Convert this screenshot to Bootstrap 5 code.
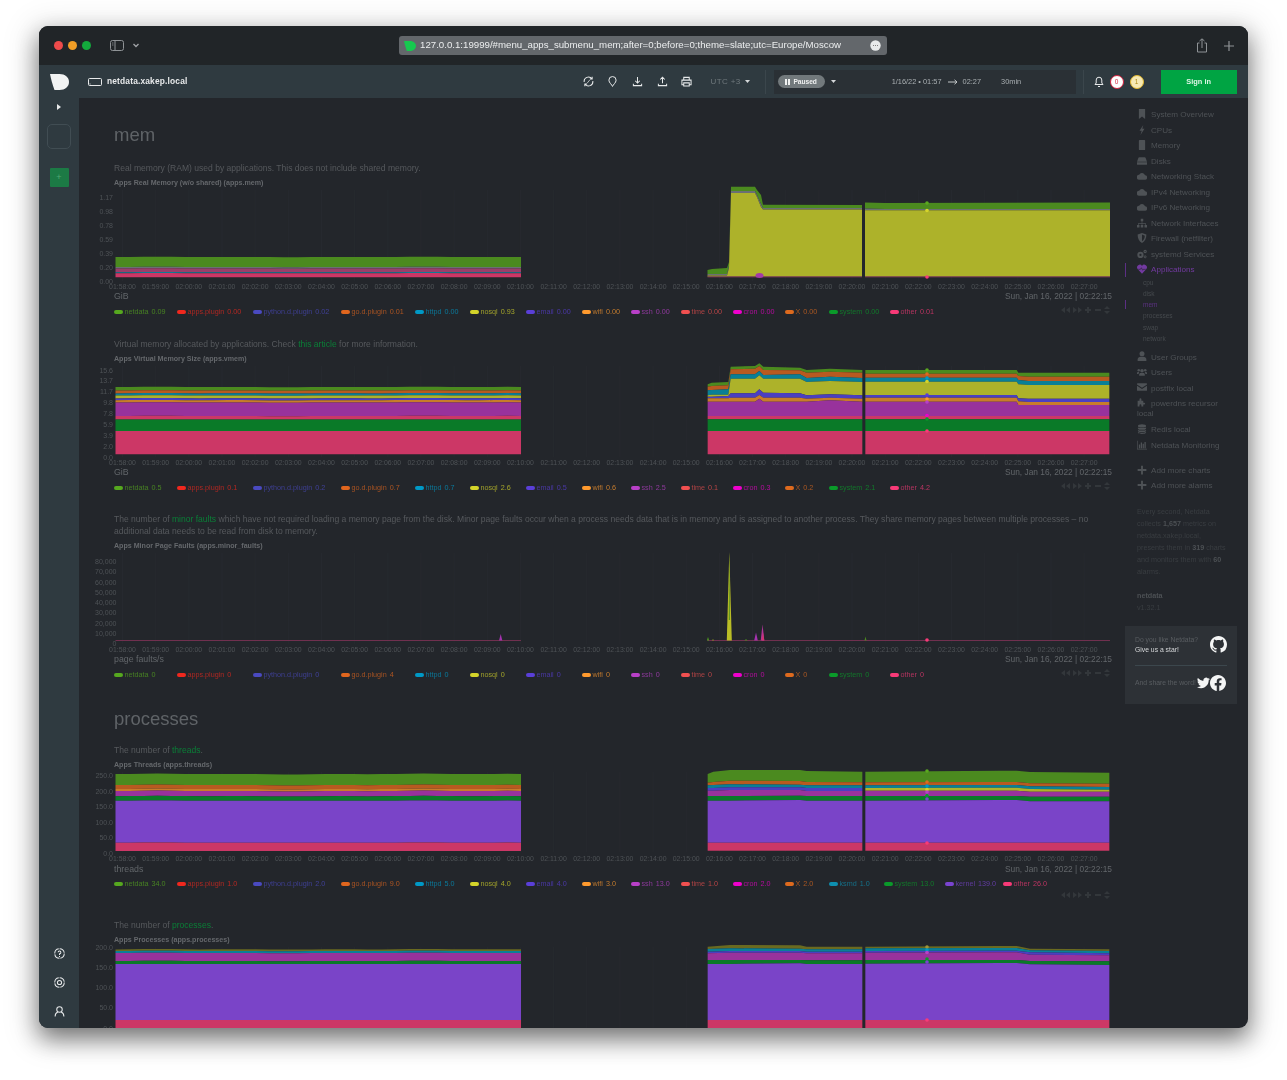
<!DOCTYPE html>
<html lang="en">
<head>
<meta charset="utf-8">
<title>netdata.xakep.local</title>
<link href="https://cdn.jsdelivr.net/npm/bootstrap@5.3.0/dist/css/bootstrap.min.css" rel="stylesheet">
<style>
html,body{height:1080px;overflow:hidden}
body{background:#fff;padding:26px 39px 52px;font-family:"Liberation Sans",Arial,sans-serif}
.sprite{position:absolute;width:0;height:0}
.win{height:1002px;width:1209px;border-radius:9px;overflow:hidden;background:#23262b;box-shadow:0 10px 24px rgba(0,0,0,.55),0 6px 28px 16px rgba(0,0,0,.06);filter:blur(.3px)}
.tbar{height:39px;background:#212528;flex:none;position:relative}
.light{width:9px;height:9px;border-radius:50%;margin-right:5px}
.l1{background:#ee4b4b;margin-left:14.5px}.l2{background:#f19d26}.l3{background:#13a83c}
.side-ic{margin-left:14.5px}.side-car{margin-left:7.5px}
.url{position:absolute;left:360px;top:10px;width:488px;height:19px;background:#63676b;border-radius:3px;color:#eceeef;font-size:9.68px;padding:0 6px 0 5px}
.plus-ic{margin:0 13px 0 15px}
.ndh{height:33px;background:#2f3a40;flex:none;color:#e8eaeb}
.ndh .hi{width:24.6px;text-align:center;flex:none;line-height:0}
.ndlogo{margin-left:11px}.monitor{margin-left:19px}
.host{font-size:8.4px;font-weight:700;margin-left:5px;width:469px;flex:none;letter-spacing:.02em}
.utc{font-size:8px;color:#6f787c;margin-left:11.5px;letter-spacing:.05em}
.car1{margin:0 15px 0 4px}.car2{margin:0 56px 0 6px}.arrow{margin:0 5px 0 6px}.dur{margin-left:20px}.bell{margin-left:10px}
.vr1{width:1px;height:24px;background:#3b464c;flex:none}
.tbox{width:302px;height:24px;background:#2a3035;margin-left:8px;margin-right:7px;font-size:7.4px;color:#a9afb2;flex:none}
.pill{background:#72797c;color:#f0f1f1;border-radius:7px;width:47px;height:13px;margin-left:4px;font-size:6.6px;font-weight:700;line-height:13px}
.pill svg{margin-right:3px}
.bdg{width:14px;height:14px;border-radius:50%;background:#fff;font-size:6.5px;line-height:11px;text-align:center;flex:none}
.b-r{border:1.5px solid #d6213e;color:#d6213e;margin-left:6px}
.b-y{border:1.5px solid #e2b72c;color:#b08a18;background:#f6e9b4;margin-left:6px}
.signin{width:76px;height:24px;background:#00a443;color:#dff5e7;font-size:7.4px;font-weight:700;border:0;border-radius:0;margin-left:17px;padding:0}
.rail{width:40px;flex:none;background:#2f3a40;padding-top:4px}
.chev{margin-top:2px}
.dash{width:24px;height:25px;border:1px solid #414d53;border-radius:5px;margin-top:14px}
.addb{width:19px;height:19px;background:#1c7a45;margin-top:19px;border-radius:1px;color:#4fa874;font-size:9px;line-height:19px;text-align:center}
.rmt{margin-top:18px}.rlast{margin:18px 0 11px}
main{width:1041px;flex:none;overflow:hidden;padding:26px 8px 0 35px}
h2.sec{font-size:18.5px;line-height:22px;color:#5f6367;font-weight:400;margin:0 0 16px}
h2.sec.second{margin:26.5px 0 14px}
.desc{font-size:8.56px;line-height:12px;color:#56595d;margin:0}
.desc a{color:#0a7f37;text-decoration:none}
.ctitle{font-size:7.1px;font-weight:700;line-height:12px;height:12px;margin-top:3px;color:#65686c}
main svg.chart{display:block;margin-left:-35px;width:1040px;overflow:visible}
.unit{font-size:8.35px;line-height:10px;height:10px;color:#62666a}
.unit span:first-child{font-size:8.8px}
.lg{height:12px;margin-top:5px;font-size:7.2px;line-height:12px;white-space:nowrap}
.lg i{display:inline-block;width:9px;height:4px;border-radius:2px;margin-right:1.5px;flex:none}
.lg span span{opacity:.68}
.lg b{font-weight:400;opacity:.72;margin-left:3px}
.blk{margin-bottom:19.5px}
.blk4{margin-bottom:18px}
.blk4 .lg{margin-top:4px}
.navrow{height:11px}
.navb{width:50px;height:8px;fill:#33373b;flex:none;margin-right:2px}
.rnav{width:128px;flex:none;padding:9.25px 11px 0 5px;color:#4e5256;font-size:8.1px}
.it{padding-left:12px;line-height:15.5px;min-height:15.5px;position:relative}
.it svg{width:10px;height:10px;fill:#4e5256;margin:-2px 4px 0 0;vertical-align:middle}
.it.wrap{line-height:10.6px;padding-top:2.5px;padding-bottom:2.5px}
.it.act,.it.act svg{color:#723aa0;fill:#723aa0}
.it.act::before,.sub.act::before{content:"";position:absolute;left:0;top:1px;bottom:1px;width:1px;background:#5c2f85}
.sub{position:relative;font-size:6.5px;line-height:11.2px;padding-left:18px;color:#45494d}
.sub.first{margin-top:-1px}
.sub.act{color:#5b3180}
.mt-g{margin-top:5.6px}
.it.add{line-height:15px;min-height:15px}
.mt-a{margin-top:9.5px}
.blurb{font-size:7.2px;line-height:12px;color:#393d41;padding:0 10px 0 12px;margin:13px 0 12px}
.blurb strong{color:#4c5054}
.star{background:#2d3136;height:78px;margin-top:12px;padding:9px 10px 0;font-size:6.8px;color:#595d61;line-height:10px}
.star em{font-style:normal;color:#d6d8da}
.star hr{border:0;border-top:1px solid #3c474d;opacity:1;margin:10px 0 9px}
.star .share{white-space:nowrap;margin-right:-6px}
.fbic{margin-right:1px}
</style>
</head>
<body>
<svg class="sprite">
<symbol id="bookmark" viewBox="0 0 16 16"><path d="M3 0h10v16l-5-4-5 4z"/></symbol>
<symbol id="bolt" viewBox="0 0 16 16"><path d="M10 0 4 9h3.500L5.500 16l6.500-10H8.500z"/></symbol>
<symbol id="chip" viewBox="0 0 16 16"><path d="M4 0h8a1 1 0 0 1 1 1v14a1 1 0 0 1-1 1H4a1 1 0 0 1-1-1V1a1 1 0 0 1 1-1z"/></symbol>
<symbol id="hdd" viewBox="0 0 16 16"><path d="M4 2h8a2 2 0 0 1 2 1.500L16 9H0l2-5.500A2 2 0 0 1 4 2zM0 10h16v3a1 1 0 0 1-1 1H1a1 1 0 0 1-1-1z"/></symbol>
<symbol id="cloud" viewBox="0 0 16 16"><path d="M4 14a4 4 0 0 1-.6-8A5 5 0 0 1 12.800 6.800 3.600 3.600 0 0 1 12.400 14z"/></symbol>
<symbol id="sitemap" viewBox="0 0 16 16"><path d="M6 1h4v4H6zM7.500 5h1v3h5.500v3h-1V9H8.500v2h-1V9H3v2H2V8h5.500zM0 11h4v4H0zM6 11h4v4H6zM12 11h4v4h-4z"/></symbol>
<symbol id="shield" viewBox="0 0 16 16"><path d="M8 0l7 2.500c0 6-2 11-7 13.500C3 13.500 1 8.500 1 2.500zM8 2.500v10.600c3-1.900 4.300-5.300 4.500-8.900z" fill-rule="evenodd"/></symbol>
<symbol id="cogs" viewBox="0 0 16 16"><circle cx="5.500" cy="9.500" r="3.400" fill="none" stroke="#4e5256" stroke-width="3.200"/><circle cx="13" cy="4" r="1.800" fill="none" stroke="#4e5256" stroke-width="1.800"/><circle cx="13" cy="12.500" r="1.600" fill="none" stroke="#4e5256" stroke-width="1.600"/></symbol>
<symbol id="heart" viewBox="0 0 16 16"><path d="M8 15.500 1 8A4.300 4.300 0 0 1 8 3a4.300 4.300 0 0 1 7 5z"/><path d="M2 8.500h3.500L7 6l2 4 1-1.500h4" fill="none" stroke="#23262b" stroke-width="1"/></symbol>
<symbol id="user" viewBox="0 0 16 16"><circle cx="8" cy="4.500" r="4"/><path d="M1 16v-2.500C1 10.500 3.500 9 5.500 9h5c2 0 4.500 1.500 4.500 4.500V16z"/></symbol>
<symbol id="users" viewBox="0 0 16 16"><circle cx="8" cy="6" r="2.800"/><circle cx="2.800" cy="5" r="2"/><circle cx="13.200" cy="5" r="2"/><path d="M3.500 14v-2c0-1.500 1-2.500 2.500-2.500h4c1.500 0 2.500 1 2.500 2.500v2zM0 11V9.500C0 8.500 1 8 2 8h1.500L2.500 11zM16 11V9.500c0-1-1-1.500-2-1.500h-1.500l1 3z"/></symbol>
<symbol id="mail" viewBox="0 0 16 16"><path d="M1 2h14a1 1 0 0 1 1 1v1L8 9 0 4V3a1 1 0 0 1 1-1zM0 6l8 5 8-5v7a1 1 0 0 1-1 1H1a1 1 0 0 1-1-1z"/></symbol>
<symbol id="puzzle" viewBox="0 0 16 16"><path d="M1 6h3V3.500a1.500 1.500 0 1 1 3 0V6h3v3h1.500a1.500 1.500 0 1 1 0 3H10v3H7v-2a1.500 1.500 0 1 0-3 0v2H1z"/></symbol>
<symbol id="db" viewBox="0 0 16 16"><ellipse cx="8" cy="3" rx="6.500" ry="2.700"/><path d="M1.500 5c1 2 12 2 13 0v2.500c-1 2.500-12 2.500-13 0zM1.500 9c1 2 12 2 13 0v2c-1 2.500-12 2.500-13 0zM1.500 12.500c1 2 12 2 13 0V14c-1 2.500-12 2.500-13 0z"/></symbol>
<symbol id="bars" viewBox="0 0 16 16"><path d="M0 1h1v13h15v1H0zM3 7h2v6H3zM6 4h2v9H6zM9 6h2v7H9zM12 3h2v10h-2z"/></symbol>
<symbol id="plus" viewBox="0 0 16 16"><path d="M6.500 1h3v5.500H15v3H9.500V15h-3V9.500H1v-3h5.500z"/></symbol>
<symbol id="gh" viewBox="0 0 16 16"><path d="M8 0C3.580 0 0 3.580 0 8c0 3.540 2.290 6.530 5.470 7.590.4.070.55-.17.55-.38 0-.19-.01-.82-.01-1.490-2.010.37-2.530-.49-2.690-.94-.09-.23-.48-.94-.82-1.130-.28-.15-.68-.52-.01-.53.63-.01 1.080.58 1.230.82.72 1.210 1.870.87 2.330.66.070-.52.28-.87.51-1.070-1.780-.2-3.640-.89-3.640-3.950 0-.87.31-1.590.82-2.150-.08-.2-.36-1.020.08-2.120 0 0 .67-.21 2.200.82.64-.18 1.320-.27 2-.27.68 0 1.360.09 2 .27 1.530-1.040 2.200-.82 2.200-.82.44 1.100.16 1.920.08 2.120.51.56.82 1.270.82 2.150 0 3.070-1.870 3.750-3.650 3.950.29.25.54.73.54 1.480 0 1.070-.01 1.930-.01 2.200 0 .21.15.46.55.38A8.012 8.012 0 0 0 16 8c0-4.420-3.580-8-8-8z"/></symbol>
<symbol id="tw" viewBox="0 0 16 16"><path d="M5.026 15c6.038 0 9.341-5.003 9.341-9.334 0-.14 0-.282-.006-.422A6.685 6.685 0 0 0 16 3.542a6.658 6.658 0 0 1-1.889.518 3.301 3.301 0 0 0 1.447-1.817 6.533 6.533 0 0 1-2.087.793A3.286 3.286 0 0 0 7.875 6.030a9.325 9.325 0 0 1-6.767-3.429 3.289 3.289 0 0 0 1.018 4.382A3.323 3.323 0 0 1 .64 6.575v.045a3.288 3.288 0 0 0 2.632 3.218 3.203 3.203 0 0 1-.865.115 3.230 3.230 0 0 1-.614-.057 3.283 3.283 0 0 0 3.067 2.277A6.588 6.588 0 0 1 .78 13.580a6.320 6.320 0 0 1-.78-.045A9.344 9.344 0 0 0 5.026 15z"/></symbol>
<symbol id="fb" viewBox="0 0 16 16"><path d="M16 8.049c0-4.446-3.582-8.050-8-8.050C3.580 0-.002 3.603-.002 8.050c0 4.017 2.926 7.347 6.750 7.951v-5.625h-2.030V8.050H6.750V6.275c0-2.017 1.195-3.131 3.022-3.131.876 0 1.791.157 1.791.157v1.980h-1.009c-.993 0-1.303.621-1.303 1.258v1.510h2.218l-.354 2.326H9.250V16c3.824-.604 6.750-3.934 6.750-7.951z"/></symbol>
<symbol id="logo" viewBox="0 0 19 16"><path d="M0 0h9.500C15 0 19 3.500 19 8s-4 8-9.500 8H4.500C2.500 11 1 5 0 0z"/></symbol>
<symbol id="navg" viewBox="0 0 50 8"><path d="M5 1v6L1 4zM10 1v6L6 4zM13 1v6l4-3zM18 1v6l4-3zM27 1h2v2h2v2h-2v2h-2V5h-2V3h2zM35 3h6v2h-6zM47 0l3 3h-6zM47 8l-3-3h6z"/></symbol>
</svg>

<div class="win d-flex flex-column">
  <div class="tbar d-flex align-items-center">
    <span class="light l1"></span><span class="light l2"></span><span class="light l3"></span>
    <svg class="side-ic" width="14" height="11" viewBox="0 0 14 11" fill="none" stroke="#8f9396"><rect x=".5" y=".5" width="13" height="10" rx="2"/><path d="M5 .5v10"/><path d="M2 3h1.500M2 5h1.500" stroke-width=".8"/></svg>
    <svg class="side-car" width="8" height="5" viewBox="0 0 8 5" fill="none" stroke="#a2a5a8" stroke-width="1.300"><path d="M1.500 1 4 3.500 6.500 1"/></svg>
    <div class="url d-flex align-items-center">
      <svg width="12" height="10" fill="#16c94f" class="me-1 flex-none"><use href="#logo"/></svg>
      <span>127.0.0.1:19999/#menu_apps_submenu_mem;after=0;before=0;theme=slate;utc=Europe/Moscow</span>
      <svg class="ms-auto" width="11" height="11" viewBox="0 0 11 11"><circle cx="5.500" cy="5.500" r="5.200" fill="#e8eaeb"/><path d="M3 5.500h.8M5.100 5.500h.8M7.200 5.500h.8" stroke="#666" stroke-width="1"/></svg>
    </div>
    <svg class="ms-auto" width="12" height="15" viewBox="0 0 12 15" fill="none" stroke="#8f9396"><path d="M3.500 5H1.500v9h9V5h-2M6 10V1M3.500 3 6 .8 8.500 3"/></svg>
    <svg class="plus-ic" width="12" height="12" viewBox="0 0 12 12" stroke="#8f9396"><path d="M6 1v10M1 6h10" stroke-width="1.200"/></svg>
  </div>

  <div class="ndh d-flex align-items-center">
    <svg width="19" height="16" fill="#f2f3f3" class="flex-none ndlogo"><use href="#logo"/></svg>
    <svg width="14" height="8" viewBox="0 0 14 8" fill="none" stroke="#e8eaeb" class="flex-none monitor"><rect x=".5" y=".5" width="13" height="7" rx="1"/><path d="M1.500 6h1"/></svg>
    <span class="host">netdata.xakep.local</span>
    <span class="hi"><svg width="11" height="11" viewBox="0 0 12 12" fill="none" stroke="#e8eaeb" stroke-width="1.100"><path d="M1.300 6.500A4.700 4.700 0 0 1 9.700 3M10.700 5.500A4.700 4.700 0 0 1 2.300 9M10 .8V3.300H7.500M2 11.200V8.700H4.500"/><path d="M4.500 7.800 7.500 4.200" stroke-width=".8"/></svg></span>
    <span class="hi"><svg width="9" height="11" viewBox="0 0 10 12" fill="none" stroke="#e8eaeb" stroke-width="1.100"><path d="M5 11.500C4.500 9.500 1 7.500 1 4.500a4 4 0 0 1 8 0c0 3-3.500 5-4 7z"/></svg></span>
    <span class="hi"><svg width="11" height="11" viewBox="0 0 12 12" fill="none" stroke="#e8eaeb" stroke-width="1.100"><path d="M6 1v6.500M3.500 5.200 6 7.700l2.500-2.500M1.500 8.500v2h9v-2"/></svg></span>
    <span class="hi"><svg width="11" height="11" viewBox="0 0 12 12" fill="none" stroke="#e8eaeb" stroke-width="1.100"><path d="M6 8V1.500M3.500 3.800 6 1.300l2.500 2.500M1.500 8.500v2h9v-2"/></svg></span>
    <span class="hi"><svg width="11" height="11" viewBox="0 0 12 12" fill="none" stroke="#e8eaeb" stroke-width="1.100"><path d="M3 4.500v-3h6v3M3 9.500H1V4.500h10v5H9M3 7.500h6v3.500H3z"/></svg></span>
    <span class="utc">UTC +3</span>
    <svg width="5" height="3" viewBox="0 0 5 3" fill="#d5d8da" class="flex-none car1"><path d="M0 0h5L2.500 3z"/></svg>
    <span class="vr1"></span>
    <div class="tbox d-flex align-items-center">
      <span class="pill d-flex align-items-center justify-content-center"><svg width="5" height="6" viewBox="0 0 5 6" fill="#f0f1f1"><path d="M0 0h2v6H0zM3 0h2v6H3z"/></svg>Paused</span>
      <svg width="5" height="3" viewBox="0 0 5 3" fill="#d5d8da" class="flex-none car2"><path d="M0 0h5L2.500 3z"/></svg>
      <span>1/16/22 • 01:57</span>
      <svg class="arrow" width="10" height="6" viewBox="0 0 10 6" fill="none" stroke="#c3c7c9"><path d="M0 3h9M6.500 .8 9 3 6.500 5.200"/></svg>
      <span>02:27</span>
      <span class="dur">30min</span>
    </div>
    <span class="vr1"></span>
    <svg class="bell" width="10" height="11" viewBox="0 0 10 11" fill="none" stroke="#e8eaeb"><path d="M1 8.500h8L7.800 7V4a2.800 2.800 0 0 0-5.600 0v3zM4 10.500h2"/></svg>
    <span class="bdg b-r">0</span>
    <span class="bdg b-y">1</span>
    <button class="btn signin">Sign in</button>
  </div>

  <div class="d-flex flex-grow-1 overflow-hidden">
    <aside class="rail d-flex flex-column align-items-center">
      <svg class="chev" width="4" height="6" viewBox="0 0 4 6" fill="#e8eaeb"><path d="M0 0l4 3-4 3z"/></svg>
      <div class="dash"></div>
      <div class="addb">+</div>
      <svg class="mt-auto" width="11" height="11" viewBox="0 0 12 12" fill="none" stroke="#e8eaeb" stroke-width="1.100"><circle cx="6" cy="6" r="5.200" stroke-dasharray="7 1"/><path d="M4.500 4.700A1.500 1.500 0 1 1 6 6.300v1.200M6 8.700v1"/></svg>
      <svg class="rmt" width="11" height="11" viewBox="0 0 12 12" fill="none" stroke="#e8eaeb" stroke-width="1.100"><circle cx="6" cy="6" r="5.200" stroke-dasharray="7 1"/><circle cx="6" cy="6" r="2.300"/></svg>
      <svg class="rlast" width="11" height="11" viewBox="0 0 12 12" fill="none" stroke="#e8eaeb" stroke-width="1.100"><circle cx="6" cy="3.800" r="3"/><path d="M1.200 11.500c0-3 1.500-4.500 3-5M10.800 11.500c0-3-1.500-4.500-3-5"/></svg>
    </aside>

    <main id="m"></main>

    <nav class="rnav">
      <div class="it"><svg><use href="#bookmark"/></svg>System Overview</div>
      <div class="it"><svg><use href="#bolt"/></svg>CPUs</div>
      <div class="it"><svg><use href="#chip"/></svg>Memory</div>
      <div class="it"><svg><use href="#hdd"/></svg>Disks</div>
      <div class="it"><svg><use href="#cloud"/></svg>Networking Stack</div>
      <div class="it"><svg><use href="#cloud"/></svg>IPv4 Networking</div>
      <div class="it"><svg><use href="#cloud"/></svg>IPv6 Networking</div>
      <div class="it"><svg><use href="#sitemap"/></svg>Network Interfaces</div>
      <div class="it"><svg><use href="#shield"/></svg>Firewall (netfilter)</div>
      <div class="it"><svg><use href="#cogs"/></svg>systemd Services</div>
      <div class="it act"><svg><use href="#heart"/></svg>Applications</div>
      <div class="sub first">cpu</div><div class="sub">disk</div><div class="sub act">mem</div><div class="sub">processes</div><div class="sub">swap</div><div class="sub">network</div>
      <div class="it mt-g"><svg><use href="#user"/></svg>User Groups</div>
      <div class="it"><svg><use href="#users"/></svg>Users</div>
      <div class="it"><svg><use href="#mail"/></svg>postfix local</div>
      <div class="it wrap"><svg><use href="#puzzle"/></svg>powerdns recursor<br>local</div>
      <div class="it"><svg><use href="#db"/></svg>Redis local</div>
      <div class="it"><svg><use href="#bars"/></svg>Netdata Monitoring</div>
      <div class="it add mt-a"><svg><use href="#plus"/></svg>Add more charts</div>
      <div class="it add"><svg><use href="#plus"/></svg>Add more alarms</div>
      <p class="blurb">Every second, Netdata collects <strong>1,657</strong> metrics on netdata.xakep.local, presents them in <strong>319</strong> charts and monitors them with <strong>60</strong> alarms.</p>
      <p class="blurb m-0"><strong>netdata</strong><br>v1.32.1</p>
      <div class="star">
        <div class="d-flex justify-content-between align-items-center">
          <div>Do you like Netdata?<br><em>Give us a star!</em></div>
          <svg width="17" height="17" fill="#f4f5f5"><use href="#gh"/></svg>
        </div>
        <hr>
        <div class="d-flex align-items-center">
          <span class="share">And share the word!</span>
          <svg class="ms-auto" width="13" height="13" fill="#f4f5f5"><use href="#tw"/></svg>
          <svg class="fbic" width="16" height="16" fill="#f4f5f5"><use href="#fb"/></svg>
        </div>
      </div>
    </nav>
  </div>
</div>

<script>
const C={g:'#4b8a1f',ol:'#adb22a',pu:'#7a44c8',pk:'#cc3766',dg:'#0a7a28',mg:'#98329c',br:'#b85a20',te:'#0a7f96',bl:'#4b3fc0',or:'#c87c2a',gr:'#6a6f74',rm:'#9a3f6a',dk:'#6a6a20'};
const SW={netdata:['#56a81f',63],'apps.plugin':['#f0281e',76],'python.d.plugin':['#4a4ac0',88],'go.d.plugin':['#e0661e',74],httpd:['#0099c6',55],nosql:['#d4d42a',56],email:['#5a3fd8',56],wifi:['#ff9a2e',49],ssh:['#b840c8',50],time:['#f05050',52],cron:['#ee00cc',52],X:['#dd6a1e',44],ksmd:['#0e8fb0',55],system:['#0a9a2a',61],kernel:['#7a44d0',58],other:['#f83a78',60]};
const base=['netdata','apps.plugin','python.d.plugin','go.d.plugin','httpd','nosql','email','wifi','ssh','time','cron','X','system','other'];
const base4=['netdata','apps.plugin','python.d.plugin','go.d.plugin','httpd','nosql','email','wifi','ssh','time','cron','X','ksmd','system','kernel','other'];
function band(xs,tops,bots,col){let p=xs.map((x,i)=>x+','+tops[i].toFixed(1));for(let i=xs.length-1;i>=0;i--)p.push(xs[i]+','+bots[i].toFixed(1));return `<polygon points="${p.join(' ')}" fill="${col}"/>`}
/* a stack: rows of [colour, y at each x]; last row is the baseline */
function stack(xs,rows){let s='';for(let r=0;r<rows.length-1;r++)s+=band(xs,rows[r][1],rows[r+1][1],rows[r][0]);return s}
/* an almost flat stack with a small wobble in every boundary but the baseline */
function flat(x0,x1,rows,amp){const xs=[];for(let x=x0;x<x1;x+=14)xs.push(x);xs.push(x1);
 const n=rows.length;return stack(xs,rows.map((r,k)=>[r[0],xs.map(x=>r[1]+(k<n-1?amp*(k<n-3?1:.3)*(Math.sin(x*.071)+Math.sin(x*.023+1))*.5:0))]))}
function pxStack(x0,y0,pxs,rows){return stack(pxs.map(p=>x0+p/3),rows.map(r=>[r[0],r[1].map(v=>y0+v/3)]))}
function dots(list){return list.map(d=>`<circle cx="${d[0]}" cy="${d[1]}" r="1.800" fill="${d[2]}"/>`).join('')}
function xlabels(y){let s='';for(let i=0;i<30;i++){const t=new Date(Date.UTC(2022,0,16,1,58+i));const l=String(t.getUTCHours()).padStart(2,'0')+':'+String(t.getUTCMinutes()).padStart(2,'0')+':00';s+=`<text x="${(122.5+33.16*i).toFixed(1)}" y="${y}" text-anchor="middle" font-size="6.9" fill="#4e5256">${l}</text>`}return s}
function grid(a,b){let s='';for(let i=0;i<30;i++){const x=(122.5+33.16*i).toFixed(1);s+=`<line x1="${x}" x2="${x}" y1="${a}" y2="${b}" stroke="#282b30" stroke-width=".7"/>`}return s}
function ylabels(list,r){return list.map(l=>`<text x="${r||113}" y="${l[1]+2.5}" text-anchor="end" font-size="7" fill="#4e5256">${l[0]}</text>`).join('')}
function ticks(vals,a,b){return vals.map((v,i)=>[v,a+(b-a)*i/(vals.length-1)])}
function svg(top,h,body){return `<svg class="chart" style="height:${h}px" viewBox="79 ${top} 1040 ${h}" font-family="Liberation Sans, Arial, sans-serif">${body}</svg>`}
const NAV='<svg class="navb ms-auto"><use href="#navg"/></svg>';
function legend(names,vals,nav){return `<div class="lg d-flex">`+names.map((n,i)=>`<span class="d-inline-flex align-items-center flex-none" style="width:${SW[n][1]}px;color:${SW[n][0]}"><i style="background:${SW[n][0]}"></i><span>${n}</span><b>${vals[i]}</b></span>`).join('')+(nav?NAV:'')+`</div>`}
function unit(u){return `<div class="unit d-flex justify-content-between"><span>${u}</span><span>Sun, Jan 16, 2022 | 02:22:15</span></div>`}

/* chart 1 */
const c1=grid(190,281)+ylabels(ticks(['1.17','0.98','0.78','0.59','0.39','0.20','0.00'],197,281))
+flat(115.5,521,[[C.g,257],[C.gr,267],[C.rm,268.500],[C.te,272.200],[C.pk,273.200],[C.pk,277.300]],.25)
+stack([707.500,712,727,729,731,755,757,761,763,862],[
 [C.g,[270,269,268,262,186.700,186.700,190,195,204.700,205]],
 [C.gr,[274,274,274,266,191,191,195,204,208,208]],
 [C.ol,[275.500,275.500,275.500,268,193,193,197,207,209.500,209.500]],
 [C.rm,[276.500,276.500,276.500,276.500,276.500,276.500,276.500,276.500,276.500,276.500]],
 ['#000',[277.300,277.300,277.300,277.300,277.300,277.300,277.300,277.300,277.300,277.300]]])
+stack([865,885,1110],[
 [C.g,[202.500,203,202.500]],[C.gr,[208.500,209,209]],[C.ol,[210.300,210.300,210.300]],[C.rm,[276.500,276.500,276.500]],['#000',[277.300,277.300,277.300]]])
+`<ellipse cx="759.500" cy="275.500" rx="4" ry="2.500" fill="#a33aa8"/>`
+dots([[927,203,'#5aa81f'],[927,210.500,'#d4d42a'],[927,277,'#f83a78']])+xlabels(288.5);

/* chart 2 */
const p2=[323,335,385,392,465,478,490,600,620,690,787];
const c2=grid(365,456)+ylabels(ticks(['15.6','13.7','11.7','9.8','7.8','5.9','3.9','2.0','0.0'],369,456))
+flat(115.5,521,[[C.g,386],[C.br,389.500],[C.te,392.300],[C.ol,394.500],[C.bl,397.300],[C.or,399.200],[C.mg,401.500],[C.pk,415],[C.dg,418.500],[C.pk,430],[C.pk,453.300]],.35)
+pxStack(600,355,p2,[
 [C.g,[85,80,78,32,30,22,32,35,42,38,42]],
 [C.br,[92,90,88,40,38,30,42,43,50,47,50]],
 [C.te,[103,102,100,55,55,45,57,55,66,62,66]],
 [C.ol,[118,116,116,68,68,58,68,68,78,75,78]],
 [C.bl,[122,122,120,112,112,100,110,112,118,115,118]],
 [C.or,[127,127,127,125,125,117,125,125,128,125,128]],
 [C.mg,[137,137,137,137,137,128,137,137,137,133,137]],
 [C.pk,[180,180,180,180,180,180,180,180,180,180,180]],
 [C.dg,[190,190,190,190,190,190,190,190,190,190,190]],
 [C.pk,[225,225,225,225,225,225,225,225,225,225,225]],
 ['#000',[295,295,295,295,295,295,295,295,295,295,295]]])
+pxStack(600,355,[796,1250,1255,1285,1528],[
 [C.g,[42,42,50,50,50]],
 [C.br,[53,53,60,62,62]],
 [C.te,[65,65,72,75,75]],
 [C.ol,[77,77,85,87,87]],
 [C.bl,[117,117,127,128,128]],
 [C.or,[125,125,136,138,138]],
 [C.mg,[137,137,147,147,147]],
 [C.pk,[180,180,180,180,180]],
 [C.dg,[190,190,190,190,190]],
 [C.pk,[225,225,225,225,225]],
 ['#000',[295,295,295,295,295]]])
+dots([[927,369,'#5aa81f'],[927,373,'#dd6a1e'],[927,377,'#0099c6'],[927,380.500,'#d4d42a'],[927,394,'#5a3fd8'],[927,398,'#ff9a2e'],[927,401,'#b840c8'],[927,414.500,'#ee00cc'],[927,418,'#0a9a2a'],[927,430,'#f83a78']])+xlabels(463.5);

/* chart 3 */
function spike(x,w,y,col,b){return `<polygon points="${x-w},${b} ${x},${y} ${x+w},${b}" fill="${col}"/>`}
const c3=grid(553,644)+ylabels(ticks(['80,000','70,000','60,000','50,000','40,000','30,000','20,000','10,000','0'],561.5,643.5),116.5)
+`<path d="M115.500 640.500H521M707.500 640.500H1110" stroke="#70304f" stroke-width="1.200"/>`
+spike(500.700,1.600,634,'#a533b0',640.500)
+spike(729.300,2.500,551.700,'#b9bd26',640.500)+spike(729.300,.5,552,'#4b8a1f',620)
+spike(756,1.800,632.500,'#a533b0',640.500)+spike(762.500,1.800,624.500,'#b0359a',640.500)+spike(763,1.300,632,'#d13570',640.500)
+spike(708,1,637,'#56a81f',640.500)+spike(713,1,639,'#8a9a20',640.500)+spike(865.500,1,636.500,'#4b8a1f',640.500)+spike(746,1.500,639,'#4b8a1f',640.500)
+dots([[927,640,'#f83a78']])+xlabels(651.500);

/* chart 4 */
const c4=grid(772,852)+ylabels(ticks(['250.0','200.0','150.0','100.0','50.0','0.0'],775.7,853))
+flat(115.5,521,[[C.g,774],[C.br,785],[C.or,789],[C.mg,791],[C.dg,796.200],[C.pu,800.700],[C.pk,842.700],[C.pk,851]],.4)
+pxStack(600,760,[323,340,390,600,620,787],[
 [C.g,[42,35,30,30,33,35]],
 [C.br,[68,66,62,63,66,67]],
 [C.te,[76,75,73,74,76,76]],
 [C.bl,[84,84,82,82,84,84]],
 [C.mg,[92,92,90,90,93,93]],
 [C.dg,[108,108,108,107,108,108]],
 [C.pu,[122,122,122,120,122,122]],
 [C.pk,[248,248,248,248,248,248]],
 ['#000',[272,272,272,272,272,272]]])
+pxStack(600,760,[796,1250,1290,1528],[
 [C.g,[35,32,36,38]],
 [C.br,[67,66,70,71]],
 [C.te,[76,75,79,81]],
 [C.ol,[84,83,87,89]],
 [C.mg,[92,92,95,95]],
 [C.dg,[108,108,110,110]],
 [C.pu,[122,120,124,124]],
 [C.pk,[248,248,248,248]],
 ['#000',[272,272,272,272]]])
+dots([[927,771,'#5aa81f'],[927,782,'#dd6a1e'],[927,786,'#0099c6'],[927,789.500,'#d4d42a'],[927,792,'#b840c8'],[927,795,'#b840c8'],[927,795.500,'#0a9a2a'],[927,799,'#7a44d0'],[927,843,'#f83a78']])+xlabels(860.500);

/* chart 5 */
const c5=grid(947,1036)+ylabels(ticks(['200.0','150.0','100.0','50.0','0.0'],947,1028))
+flat(115.5,521,[[C.dk,949.300],[C.te,951],[C.mg,953],[C.dg,961],[C.pu,964],[C.pk,1020],[C.pk,1036]],.3)
+pxStack(600,760,[323,390,600,620,787],[
 [C.dk,[560,555,556,560,560]],
 [C.te,[567,565,566,568,568]],
 [C.bl,[575,573,573,575,575]],
 [C.mg,[580,578,578,580,580]],
 [C.dg,[600,600,600,601,601]],
 [C.pu,[612,612,610,612,612]],
 [C.pk,[780,780,780,780,780]],
 ['#000',[830,830,830,830,830]]])
+pxStack(600,760,[796,1250,1290,1528],[
 [C.dk,[560,558,566,568]],
 [C.te,[565,564,571,573]],
 [C.bl,[573,572,577,580]],
 [C.mg,[578,577,584,586]],
 [C.dg,[600,600,603,604]],
 [C.pu,[611,609,613,615]],
 [C.pk,[780,780,780,780]],
 ['#000',[830,830,830,830]]])
+dots([[927,947,'#a0963a'],[927,950,'#0099c6'],[927,952.500,'#b840c8'],[927,959,'#0a9a2a'],[927,962,'#7a44d0'],[927,1020,'#f83a78']]);

function block(desc,title,body,after){return `<div class="blk">${desc}<div class="ctitle">${title}</div>${body}${after}</div>`}
document.getElementById('m').innerHTML=
`<h2 class="sec">mem</h2>`
+block(`<p class="desc">Real memory (RAM) used by applications. This does not include shared memory.</p>`,'Apps Real Memory (w/o shared) (apps.mem)',svg(189,102,c1),unit('GiB')+legend(base,['0.09','0.00','0.02','0.01','0.00','0.93','0.00','0.00','0.00','0.00','0.00','0.00','0.00','0.01'],1))
+block(`<p class="desc">Virtual memory allocated by applications. Check <a href="#">this article</a> for more information.</p>`,'Apps Virtual Memory Size (apps.vmem)',svg(364,102,c2),unit('GiB')+legend(base,['0.5','0.1','0.2','0.7','0.7','2.6','0.5','0.6','2.5','0.1','0.3','0.2','2.1','4.2'],1))
+block(`<p class="desc">The number of <a href="#">minor faults</a> which have not required loading a memory page from the disk. Minor page faults occur when a process needs data that is in memory and is assigned to another process. They share memory pages between multiple processes – no additional data needs to be read from disk to memory.</p>`,'Apps Minor Page Faults (apps.minor_faults)',svg(552,102,c3),unit('page faults/s')+legend(base,['0','0','0','4','0','0','0','0','0','0','0','0','0','0'],1))
+`<h2 class="sec second">processes</h2>`
+`<div class="blk4"><p class="desc">The number of <a href="#">threads</a>.</p><div class="ctitle">Apps Threads (apps.threads)</div>${svg(771,93,c4)}${unit('threads')}${legend(base4,['34.0','1.0','2.0','9.0','5.0','4.0','4.0','3.0','13.0','1.0','2.0','2.0','1.0','13.0','139.0','26.0'],0)}<div class="navrow d-flex align-items-center">${NAV}</div></div>`
+`<div><p class="desc">The number of <a href="#">processes</a>.</p><div class="ctitle">Apps Processes (apps.processes)</div>${svg(946,90,c5)}</div>`;
</script>
</body>
</html>
